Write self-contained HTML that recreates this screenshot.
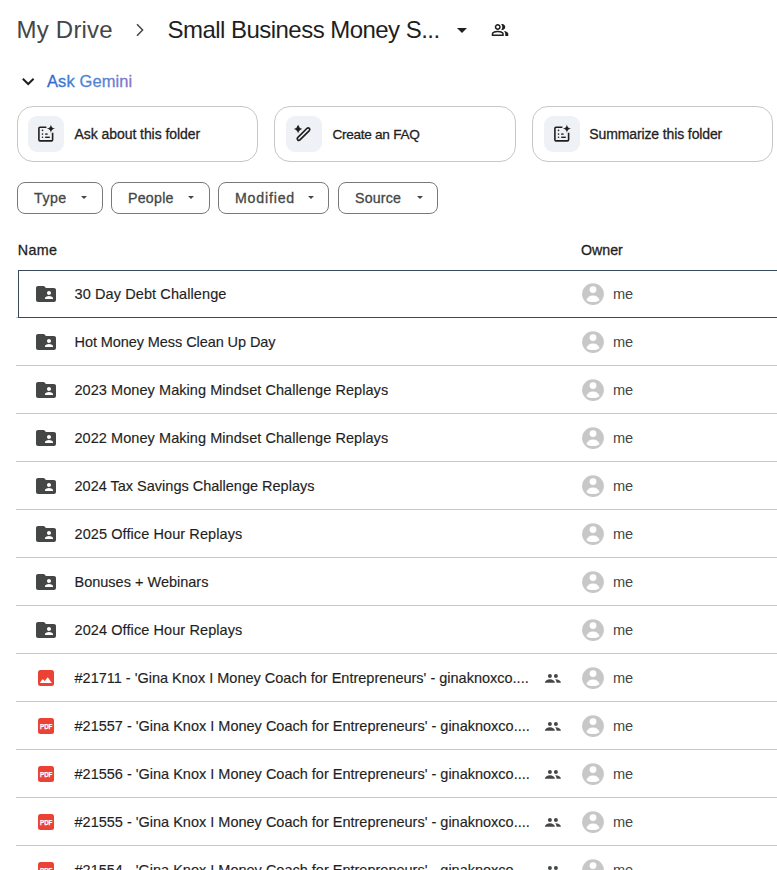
<!DOCTYPE html>
<html><head><meta charset="utf-8">
<style>
*{margin:0;padding:0;box-sizing:border-box}
html,body{width:777px;height:870px;overflow:hidden;background:#fff}
body{position:relative;font-family:"Liberation Sans",sans-serif;color:#1f1f1f}
.a{position:absolute;white-space:nowrap}
.t{position:absolute;white-space:nowrap;line-height:1}
.card{position:absolute;top:106px;height:56px;width:241px;border:1px solid #c7c7c7;border-radius:16px;background:#fff}
.ib{position:absolute;left:10px;top:9px;width:36px;height:36px;border-radius:9px;background:#eef1f6}
.ib svg{position:absolute;left:0;top:0}
.ct{-webkit-text-stroke:0.3px #1f1f1f;position:absolute;top:0;left:0;font-size:14px;line-height:1;color:#1f1f1f}
.chip{position:absolute;top:182px;height:32px;border:1px solid #79797a;border-radius:8px}
.chip .l{-webkit-text-stroke:0.3px #444746;position:absolute;left:16px;top:8.3px;font-size:14.2px;line-height:1;color:#444746}
.chip .ar{position:absolute;top:13px;width:0;height:0;border-left:3.8px solid transparent;border-right:3.8px solid transparent;border-top:3.8px solid #444746}
.row{position:absolute;left:16px;width:761px;height:48px;border-bottom:1px solid #c7c7c7}
.nm{-webkit-text-stroke:0.15px #1f1f1f;position:absolute;left:58.5px;top:17px;font-size:14.5px;line-height:1;color:#1f1f1f}
.me{position:absolute;left:596.9px;top:17px;font-size:14.6px;line-height:1;color:#444746}
.av{position:absolute;left:565px;top:12px}
.fi{position:absolute;left:18px;top:12px}
.pi{position:absolute;left:21px;top:16px;width:16px;height:16px;border-radius:2.5px;background:#ea4335}
.sh{position:absolute;left:527.5px;top:18px}
</style></head><body>

<!-- header -->
<div class="t" style="left:16.6px;top:17.5px;font-size:24px;letter-spacing:0.2px;color:#444746">My Drive</div>
<svg class="a" style="left:132px;top:22px" width="16" height="16" viewBox="0 0 16 16"><path d="M5 2.2 L10.6 8 L5 13.8" fill="none" stroke="#444746" stroke-width="1.5"/></svg>
<div class="t" style="left:167.6px;top:17.5px;font-size:24px;letter-spacing:-0.54px;color:#1f1f1f">Small Business Money S...</div>
<svg class="a" style="left:456px;top:27px" width="12" height="7" viewBox="0 0 12 7"><path d="M1 1 H11 L6 6 Z" fill="#1f1f1f"/></svg>
<svg class="a" style="left:491.2px;top:21.2px" width="18" height="18" viewBox="0 -960 960 960"><path fill="#1f1f1f" d="M40-160v-112q0-34 17.5-62.5T104-378q62-31 126-46.5T360-440q66 0 130 15.5T616-378q29 15 46.5 43.5T680-272v112H40Zm720 0v-120q0-44-24.5-84.5T666-434q51 6 96 20.5t84 35.5q36 20 55 44.5t19 53.5v120H760ZM360-480q-66 0-113-47t-47-113q0-66 47-113t113-47q66 0 113 47t47 113q0 66-47 113t-113 47Zm400-160q0 66-47 113t-113 47q-11 0-28-2.5t-28-5.5q27-32 41.5-71t14.5-81q0-42-14.5-81T544-792q14-5 28-6.5t28-1.5q66 0 113 47t47 113ZM120-240h480v-32q0-11-5.5-20T580-306q-54-27-109-40.5T360-360q-56 0-111 13.5T140-306q-9 5-14.5 14t-5.5 20v32Zm240-320q33 0 56.5-23.5T440-640q0-33-23.5-56.5T360-720q-33 0-56.5 23.5T280-640q0 33 23.5 56.5T360-560Zm0 320Zm0-400Z"/></svg>

<!-- Ask Gemini -->
<svg class="a" style="left:20px;top:74px" width="16" height="14" viewBox="0 0 16 14"><path d="M2.8 4.8 L8.2 10 L13.6 4.8" fill="none" stroke="#1f1f1f" stroke-width="2"/></svg>
<svg class="a" style="left:44px;top:68px" width="100" height="26" viewBox="0 0 100 26"><defs><linearGradient id="gg" x1="3" y1="0" x2="86" y2="0" gradientUnits="userSpaceOnUse"><stop offset="0" stop-color="#3366cc"/><stop offset="0.4" stop-color="#4787d6"/><stop offset="0.72" stop-color="#5784d4"/><stop offset="1" stop-color="#8a72c6"/></linearGradient></defs><text x="3" y="18.6" font-family="Liberation Sans" font-size="16.5" letter-spacing="0.1" fill="url(#gg)" stroke="url(#gg)" stroke-width="0.3">Ask Gemini</text></svg>

<div class="card" style="left:17px">
 <div class="ib"><svg width="36" height="36" viewBox="0 0 36 36"><g id="docic">
  <path d="M18.4 11.2 H12 Q10.9 11.2 10.9 12.3 V23.8 Q10.9 24.9 12 24.9 H23.5 Q24.6 24.9 24.6 23.8 V16.8" fill="none" stroke="#1f1f1f" stroke-width="1.6"/>
  <path d="M22.9 8.4 Q23.4 12.1 27.1 12.6 Q23.4 13.1 22.9 16.8 Q22.4 13.1 18.7 12.6 Q22.4 12.1 22.9 8.4 Z" fill="#1f1f1f"/>
  <circle cx="14.5" cy="14.4" r="0.8" fill="#1f1f1f"/><circle cx="14.5" cy="18.1" r="0.8" fill="#1f1f1f"/><circle cx="14.5" cy="21.3" r="0.8" fill="#1f1f1f"/>
  <rect x="17.2" y="17.4" width="2.4" height="1.4" fill="#1f1f1f"/><rect x="17.2" y="20.6" width="4.6" height="1.4" fill="#1f1f1f"/>
 </g></svg></div>
 <div class="ct" style="left:56.5px;top:20.1px;letter-spacing:-0.06px">Ask about this folder</div>
</div>
<div class="card" style="left:274px;width:242px">
 <div class="ib" style="left:11px"><svg width="36" height="36" viewBox="0 0 36 36">
  <path d="M21.07 12.27 L11.67 21.67 A1.6 1.6 0 0 0 13.93 23.93 L23.33 14.53 A1.6 1.6 0 0 0 21.07 12.27 Z" fill="none" stroke="#1f1f1f" stroke-width="1.7" stroke-linejoin="round"/>
  <path d="M12.1 8.7 Q13 12.1 16.4 13 Q13 13.9 12.1 17.3 Q11.2 13.9 7.8 13 Q11.2 12.1 12.1 8.7 Z" fill="#1f1f1f"/>
 </svg></div>
 <div class="ct" style="left:57.4px;top:20.5px;font-size:13.6px;letter-spacing:-0.27px">Create an FAQ</div>
</div>
<div class="card" style="left:532px">
 <div class="ib" style="left:11px"><svg width="36" height="36" viewBox="0 0 36 36"><g>
  <path d="M18.4 11.2 H12 Q10.9 11.2 10.9 12.3 V23.8 Q10.9 24.9 12 24.9 H23.5 Q24.6 24.9 24.6 23.8 V16.8" fill="none" stroke="#1f1f1f" stroke-width="1.6"/>
  <path d="M22.9 8.4 Q23.4 12.1 27.1 12.6 Q23.4 13.1 22.9 16.8 Q22.4 13.1 18.7 12.6 Q22.4 12.1 22.9 8.4 Z" fill="#1f1f1f"/>
  <circle cx="14.5" cy="14.4" r="0.8" fill="#1f1f1f"/><circle cx="14.5" cy="18.1" r="0.8" fill="#1f1f1f"/><circle cx="14.5" cy="21.3" r="0.8" fill="#1f1f1f"/>
  <rect x="17.2" y="17.4" width="2.4" height="1.4" fill="#1f1f1f"/><rect x="17.2" y="20.6" width="4.6" height="1.4" fill="#1f1f1f"/>
 </g></svg></div>
 <div class="ct" style="left:56.3px;top:20.1px;letter-spacing:-0.12px">Summarize this folder</div>
</div>

<!-- chips -->
<div class="chip" style="left:17px;width:86px"><div class="l" style="letter-spacing:0.5px">Type</div><div class="ar" style="left:63.3px"></div></div>
<div class="chip" style="left:111px;width:99px"><div class="l" style="letter-spacing:0.26px">People</div><div class="ar" style="left:76.3px"></div></div>
<div class="chip" style="left:218px;width:111px"><div class="l" style="letter-spacing:0.8px">Modified</div><div class="ar" style="left:88.5px"></div></div>
<div class="chip" style="left:338px;width:100px"><div class="l" style="letter-spacing:0.2px">Source</div><div class="ar" style="left:78.1px"></div></div>

<!-- table header -->
<div class="t" style="left:17.8px;top:243px;font-size:14.3px;letter-spacing:0.3px;-webkit-text-stroke:0.3px #1f1f1f;color:#1f1f1f">Name</div>
<div class="t" style="left:581px;top:243.2px;font-size:14.2px;letter-spacing:0px;-webkit-text-stroke:0.3px #1f1f1f;color:#1f1f1f">Owner</div>

<!--ROWS-->
<div class="a" style="left:18px;top:270px;width:770px;height:48px;border:1px solid #384a5c;z-index:5"></div>
<div class="row" style="top:270px"><svg class="fi" width="24" height="24" viewBox="0 0 24 24"><path d="M20 6h-8l-2-2H4c-1.1 0-1.99.9-1.99 2L2 18c0 1.1.9 2 2 2h16c1.1 0 2-.9 2-2V8c0-1.1-.9-2-2-2zm-5 3c1.1 0 2 .9 2 2s-.9 2-2 2-2-.9-2-2 .9-2 2-2zm4 8h-8v-1c0-1.33 2.67-2 4-2s4 .67 4 2v1z" fill="#444746"/></svg><div class="nm" style="letter-spacing:0.1px">30 Day Debt Challenge</div><svg class="av" width="24" height="24" viewBox="0 0 24 24"><circle cx="12" cy="12.1" r="10.9" fill="#c7c7c7"/><circle cx="12" cy="7.6" r="3.4" fill="#fff"/><path d="M5.4 18.2 C6.2 15.3 8.8 13.6 12 13.6 C15.2 13.6 17.8 15.3 18.6 18.2 C16.9 19.5 14.6 20.1 12 20.1 C9.4 20.1 7.1 19.5 5.4 18.2 Z" fill="#fff"/></svg><div class="me">me</div></div>
<div class="row" style="top:318px"><svg class="fi" width="24" height="24" viewBox="0 0 24 24"><path d="M20 6h-8l-2-2H4c-1.1 0-1.99.9-1.99 2L2 18c0 1.1.9 2 2 2h16c1.1 0 2-.9 2-2V8c0-1.1-.9-2-2-2zm-5 3c1.1 0 2 .9 2 2s-.9 2-2 2-2-.9-2-2 .9-2 2-2zm4 8h-8v-1c0-1.33 2.67-2 4-2s4 .67 4 2v1z" fill="#444746"/></svg><div class="nm" style="letter-spacing:-0.077px">Hot Money Mess Clean Up Day</div><svg class="av" width="24" height="24" viewBox="0 0 24 24"><circle cx="12" cy="12.1" r="10.9" fill="#c7c7c7"/><circle cx="12" cy="7.6" r="3.4" fill="#fff"/><path d="M5.4 18.2 C6.2 15.3 8.8 13.6 12 13.6 C15.2 13.6 17.8 15.3 18.6 18.2 C16.9 19.5 14.6 20.1 12 20.1 C9.4 20.1 7.1 19.5 5.4 18.2 Z" fill="#fff"/></svg><div class="me">me</div></div>
<div class="row" style="top:366px"><svg class="fi" width="24" height="24" viewBox="0 0 24 24"><path d="M20 6h-8l-2-2H4c-1.1 0-1.99.9-1.99 2L2 18c0 1.1.9 2 2 2h16c1.1 0 2-.9 2-2V8c0-1.1-.9-2-2-2zm-5 3c1.1 0 2 .9 2 2s-.9 2-2 2-2-.9-2-2 .9-2 2-2zm4 8h-8v-1c0-1.33 2.67-2 4-2s4 .67 4 2v1z" fill="#444746"/></svg><div class="nm" style="letter-spacing:0.06px">2023 Money Making Mindset Challenge Replays</div><svg class="av" width="24" height="24" viewBox="0 0 24 24"><circle cx="12" cy="12.1" r="10.9" fill="#c7c7c7"/><circle cx="12" cy="7.6" r="3.4" fill="#fff"/><path d="M5.4 18.2 C6.2 15.3 8.8 13.6 12 13.6 C15.2 13.6 17.8 15.3 18.6 18.2 C16.9 19.5 14.6 20.1 12 20.1 C9.4 20.1 7.1 19.5 5.4 18.2 Z" fill="#fff"/></svg><div class="me">me</div></div>
<div class="row" style="top:414px"><svg class="fi" width="24" height="24" viewBox="0 0 24 24"><path d="M20 6h-8l-2-2H4c-1.1 0-1.99.9-1.99 2L2 18c0 1.1.9 2 2 2h16c1.1 0 2-.9 2-2V8c0-1.1-.9-2-2-2zm-5 3c1.1 0 2 .9 2 2s-.9 2-2 2-2-.9-2-2 .9-2 2-2zm4 8h-8v-1c0-1.33 2.67-2 4-2s4 .67 4 2v1z" fill="#444746"/></svg><div class="nm" style="letter-spacing:0.06px">2022 Money Making Mindset Challenge Replays</div><svg class="av" width="24" height="24" viewBox="0 0 24 24"><circle cx="12" cy="12.1" r="10.9" fill="#c7c7c7"/><circle cx="12" cy="7.6" r="3.4" fill="#fff"/><path d="M5.4 18.2 C6.2 15.3 8.8 13.6 12 13.6 C15.2 13.6 17.8 15.3 18.6 18.2 C16.9 19.5 14.6 20.1 12 20.1 C9.4 20.1 7.1 19.5 5.4 18.2 Z" fill="#fff"/></svg><div class="me">me</div></div>
<div class="row" style="top:462px"><svg class="fi" width="24" height="24" viewBox="0 0 24 24"><path d="M20 6h-8l-2-2H4c-1.1 0-1.99.9-1.99 2L2 18c0 1.1.9 2 2 2h16c1.1 0 2-.9 2-2V8c0-1.1-.9-2-2-2zm-5 3c1.1 0 2 .9 2 2s-.9 2-2 2-2-.9-2-2 .9-2 2-2zm4 8h-8v-1c0-1.33 2.67-2 4-2s4 .67 4 2v1z" fill="#444746"/></svg><div class="nm" style="letter-spacing:0px">2024 Tax Savings Challenge Replays</div><svg class="av" width="24" height="24" viewBox="0 0 24 24"><circle cx="12" cy="12.1" r="10.9" fill="#c7c7c7"/><circle cx="12" cy="7.6" r="3.4" fill="#fff"/><path d="M5.4 18.2 C6.2 15.3 8.8 13.6 12 13.6 C15.2 13.6 17.8 15.3 18.6 18.2 C16.9 19.5 14.6 20.1 12 20.1 C9.4 20.1 7.1 19.5 5.4 18.2 Z" fill="#fff"/></svg><div class="me">me</div></div>
<div class="row" style="top:510px"><svg class="fi" width="24" height="24" viewBox="0 0 24 24"><path d="M20 6h-8l-2-2H4c-1.1 0-1.99.9-1.99 2L2 18c0 1.1.9 2 2 2h16c1.1 0 2-.9 2-2V8c0-1.1-.9-2-2-2zm-5 3c1.1 0 2 .9 2 2s-.9 2-2 2-2-.9-2-2 .9-2 2-2zm4 8h-8v-1c0-1.33 2.67-2 4-2s4 .67 4 2v1z" fill="#444746"/></svg><div class="nm" style="letter-spacing:0.087px">2025 Office Hour Replays</div><svg class="av" width="24" height="24" viewBox="0 0 24 24"><circle cx="12" cy="12.1" r="10.9" fill="#c7c7c7"/><circle cx="12" cy="7.6" r="3.4" fill="#fff"/><path d="M5.4 18.2 C6.2 15.3 8.8 13.6 12 13.6 C15.2 13.6 17.8 15.3 18.6 18.2 C16.9 19.5 14.6 20.1 12 20.1 C9.4 20.1 7.1 19.5 5.4 18.2 Z" fill="#fff"/></svg><div class="me">me</div></div>
<div class="row" style="top:558px"><svg class="fi" width="24" height="24" viewBox="0 0 24 24"><path d="M20 6h-8l-2-2H4c-1.1 0-1.99.9-1.99 2L2 18c0 1.1.9 2 2 2h16c1.1 0 2-.9 2-2V8c0-1.1-.9-2-2-2zm-5 3c1.1 0 2 .9 2 2s-.9 2-2 2-2-.9-2-2 .9-2 2-2zm4 8h-8v-1c0-1.33 2.67-2 4-2s4 .67 4 2v1z" fill="#444746"/></svg><div class="nm" style="letter-spacing:0px">Bonuses + Webinars</div><svg class="av" width="24" height="24" viewBox="0 0 24 24"><circle cx="12" cy="12.1" r="10.9" fill="#c7c7c7"/><circle cx="12" cy="7.6" r="3.4" fill="#fff"/><path d="M5.4 18.2 C6.2 15.3 8.8 13.6 12 13.6 C15.2 13.6 17.8 15.3 18.6 18.2 C16.9 19.5 14.6 20.1 12 20.1 C9.4 20.1 7.1 19.5 5.4 18.2 Z" fill="#fff"/></svg><div class="me">me</div></div>
<div class="row" style="top:606px"><svg class="fi" width="24" height="24" viewBox="0 0 24 24"><path d="M20 6h-8l-2-2H4c-1.1 0-1.99.9-1.99 2L2 18c0 1.1.9 2 2 2h16c1.1 0 2-.9 2-2V8c0-1.1-.9-2-2-2zm-5 3c1.1 0 2 .9 2 2s-.9 2-2 2-2-.9-2-2 .9-2 2-2zm4 8h-8v-1c0-1.33 2.67-2 4-2s4 .67 4 2v1z" fill="#444746"/></svg><div class="nm" style="letter-spacing:0.09px">2024 Office Hour Replays</div><svg class="av" width="24" height="24" viewBox="0 0 24 24"><circle cx="12" cy="12.1" r="10.9" fill="#c7c7c7"/><circle cx="12" cy="7.6" r="3.4" fill="#fff"/><path d="M5.4 18.2 C6.2 15.3 8.8 13.6 12 13.6 C15.2 13.6 17.8 15.3 18.6 18.2 C16.9 19.5 14.6 20.1 12 20.1 C9.4 20.1 7.1 19.5 5.4 18.2 Z" fill="#fff"/></svg><div class="me">me</div></div>
<div class="row" style="top:654px"><svg class="fi" style="left:22px;top:16px" width="16" height="16" viewBox="0 0 16 16"><rect x="0" y="0" width="16" height="16" rx="2.5" fill="#ea4335"/><path d="M1.8 13 L4.2 9.6 L5.2 9.6 L6.6 11 L9.8 7.2 L13.8 13 Z" fill="#fff"/></svg><div class="nm" style="letter-spacing:0px">#21711 - 'Gina Knox I Money Coach for Entrepreneurs' - ginaknoxco....</div><svg class="sh" width="18" height="12" viewBox="0 0 18 12"><circle cx="5.9" cy="3.9" r="2" fill="#444746"/><circle cx="11.9" cy="3.9" r="2" fill="#444746"/><path d="M0.8 10.7 C1.2 8.5 3.3 7.2 5.9 7.2 C8.5 7.2 10.6 8.5 11 10.7 Z" fill="#444746"/><path d="M11.2 7.3 C14.2 7.2 16.6 8.6 17 10.7 H12.6 C12.5 9.4 12 8.2 11.2 7.3 Z" fill="#444746"/></svg><svg class="av" width="24" height="24" viewBox="0 0 24 24"><circle cx="12" cy="12.1" r="10.9" fill="#c7c7c7"/><circle cx="12" cy="7.6" r="3.4" fill="#fff"/><path d="M5.4 18.2 C6.2 15.3 8.8 13.6 12 13.6 C15.2 13.6 17.8 15.3 18.6 18.2 C16.9 19.5 14.6 20.1 12 20.1 C9.4 20.1 7.1 19.5 5.4 18.2 Z" fill="#fff"/></svg><div class="me">me</div></div>
<div class="row" style="top:702px"><svg class="fi" style="left:22px;top:16px" width="16" height="16" viewBox="0 0 16 16"><rect x="0" y="0" width="16" height="16" rx="2.5" fill="#ea4335"/><text x="2" y="10.5" font-family="Liberation Sans" font-weight="bold" font-size="7.6" fill="#fff" stroke="#fff" stroke-width="0.25" textLength="12.4" lengthAdjust="spacingAndGlyphs">PDF</text></svg><div class="nm" style="letter-spacing:0px">#21557 - 'Gina Knox I Money Coach for Entrepreneurs' - ginaknoxco....</div><svg class="sh" width="18" height="12" viewBox="0 0 18 12"><circle cx="5.9" cy="3.9" r="2" fill="#444746"/><circle cx="11.9" cy="3.9" r="2" fill="#444746"/><path d="M0.8 10.7 C1.2 8.5 3.3 7.2 5.9 7.2 C8.5 7.2 10.6 8.5 11 10.7 Z" fill="#444746"/><path d="M11.2 7.3 C14.2 7.2 16.6 8.6 17 10.7 H12.6 C12.5 9.4 12 8.2 11.2 7.3 Z" fill="#444746"/></svg><svg class="av" width="24" height="24" viewBox="0 0 24 24"><circle cx="12" cy="12.1" r="10.9" fill="#c7c7c7"/><circle cx="12" cy="7.6" r="3.4" fill="#fff"/><path d="M5.4 18.2 C6.2 15.3 8.8 13.6 12 13.6 C15.2 13.6 17.8 15.3 18.6 18.2 C16.9 19.5 14.6 20.1 12 20.1 C9.4 20.1 7.1 19.5 5.4 18.2 Z" fill="#fff"/></svg><div class="me">me</div></div>
<div class="row" style="top:750px"><svg class="fi" style="left:22px;top:16px" width="16" height="16" viewBox="0 0 16 16"><rect x="0" y="0" width="16" height="16" rx="2.5" fill="#ea4335"/><text x="2" y="10.5" font-family="Liberation Sans" font-weight="bold" font-size="7.6" fill="#fff" stroke="#fff" stroke-width="0.25" textLength="12.4" lengthAdjust="spacingAndGlyphs">PDF</text></svg><div class="nm" style="letter-spacing:0px">#21556 - 'Gina Knox I Money Coach for Entrepreneurs' - ginaknoxco....</div><svg class="sh" width="18" height="12" viewBox="0 0 18 12"><circle cx="5.9" cy="3.9" r="2" fill="#444746"/><circle cx="11.9" cy="3.9" r="2" fill="#444746"/><path d="M0.8 10.7 C1.2 8.5 3.3 7.2 5.9 7.2 C8.5 7.2 10.6 8.5 11 10.7 Z" fill="#444746"/><path d="M11.2 7.3 C14.2 7.2 16.6 8.6 17 10.7 H12.6 C12.5 9.4 12 8.2 11.2 7.3 Z" fill="#444746"/></svg><svg class="av" width="24" height="24" viewBox="0 0 24 24"><circle cx="12" cy="12.1" r="10.9" fill="#c7c7c7"/><circle cx="12" cy="7.6" r="3.4" fill="#fff"/><path d="M5.4 18.2 C6.2 15.3 8.8 13.6 12 13.6 C15.2 13.6 17.8 15.3 18.6 18.2 C16.9 19.5 14.6 20.1 12 20.1 C9.4 20.1 7.1 19.5 5.4 18.2 Z" fill="#fff"/></svg><div class="me">me</div></div>
<div class="row" style="top:798px"><svg class="fi" style="left:22px;top:16px" width="16" height="16" viewBox="0 0 16 16"><rect x="0" y="0" width="16" height="16" rx="2.5" fill="#ea4335"/><text x="2" y="10.5" font-family="Liberation Sans" font-weight="bold" font-size="7.6" fill="#fff" stroke="#fff" stroke-width="0.25" textLength="12.4" lengthAdjust="spacingAndGlyphs">PDF</text></svg><div class="nm" style="letter-spacing:0px">#21555 - 'Gina Knox I Money Coach for Entrepreneurs' - ginaknoxco....</div><svg class="sh" width="18" height="12" viewBox="0 0 18 12"><circle cx="5.9" cy="3.9" r="2" fill="#444746"/><circle cx="11.9" cy="3.9" r="2" fill="#444746"/><path d="M0.8 10.7 C1.2 8.5 3.3 7.2 5.9 7.2 C8.5 7.2 10.6 8.5 11 10.7 Z" fill="#444746"/><path d="M11.2 7.3 C14.2 7.2 16.6 8.6 17 10.7 H12.6 C12.5 9.4 12 8.2 11.2 7.3 Z" fill="#444746"/></svg><svg class="av" width="24" height="24" viewBox="0 0 24 24"><circle cx="12" cy="12.1" r="10.9" fill="#c7c7c7"/><circle cx="12" cy="7.6" r="3.4" fill="#fff"/><path d="M5.4 18.2 C6.2 15.3 8.8 13.6 12 13.6 C15.2 13.6 17.8 15.3 18.6 18.2 C16.9 19.5 14.6 20.1 12 20.1 C9.4 20.1 7.1 19.5 5.4 18.2 Z" fill="#fff"/></svg><div class="me">me</div></div>
<div class="row" style="top:846px"><svg class="fi" style="left:22px;top:16px" width="16" height="16" viewBox="0 0 16 16"><rect x="0" y="0" width="16" height="16" rx="2.5" fill="#ea4335"/><text x="2" y="10.5" font-family="Liberation Sans" font-weight="bold" font-size="7.6" fill="#fff" stroke="#fff" stroke-width="0.25" textLength="12.4" lengthAdjust="spacingAndGlyphs">PDF</text></svg><div class="nm" style="letter-spacing:0px">#21554 - 'Gina Knox I Money Coach for Entrepreneurs' - ginaknoxco....</div><svg class="sh" width="18" height="12" viewBox="0 0 18 12"><circle cx="5.9" cy="3.9" r="2" fill="#444746"/><circle cx="11.9" cy="3.9" r="2" fill="#444746"/><path d="M0.8 10.7 C1.2 8.5 3.3 7.2 5.9 7.2 C8.5 7.2 10.6 8.5 11 10.7 Z" fill="#444746"/><path d="M11.2 7.3 C14.2 7.2 16.6 8.6 17 10.7 H12.6 C12.5 9.4 12 8.2 11.2 7.3 Z" fill="#444746"/></svg><svg class="av" width="24" height="24" viewBox="0 0 24 24"><circle cx="12" cy="12.1" r="10.9" fill="#c7c7c7"/><circle cx="12" cy="7.6" r="3.4" fill="#fff"/><path d="M5.4 18.2 C6.2 15.3 8.8 13.6 12 13.6 C15.2 13.6 17.8 15.3 18.6 18.2 C16.9 19.5 14.6 20.1 12 20.1 C9.4 20.1 7.1 19.5 5.4 18.2 Z" fill="#fff"/></svg><div class="me">me</div></div>
<!--/ROWS-->
</body></html>
